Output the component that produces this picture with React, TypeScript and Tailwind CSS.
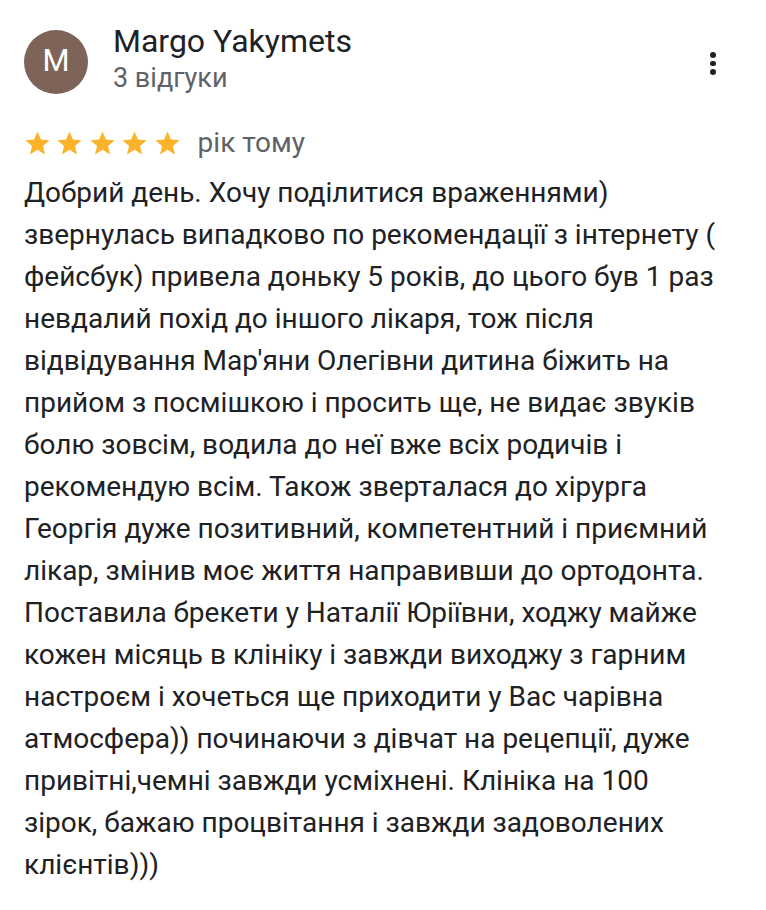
import React from 'react';

const LINES = [
  'Добрий день. Хочу поділитися враженнями)',
  'звернулась випадково по рекомендації з інтернету (',
  'фейсбук) привела доньку 5 років, до цього був 1 раз',
  'невдалий похід до іншого лікаря, тож після',
  "відвідування Мар'яни Олегівни дитина біжить на",
  'прийом з посмішкою і просить ще, не видає звуків',
  'болю зовсім, водила до неї вже всіх родичів і',
  'рекомендую всім. Також зверталася до хірурга',
  'Георгія дуже позитивний, компетентний і приємний',
  'лікар, змінив моє життя направивши до ортодонта.',
  'Поставила брекети у Наталії Юріївни, ходжу майже',
  'кожен місяць в клініку і завжди виходжу з гарним',
  'настроєм і хочеться ще приходити у Вас чарівна',
  'атмосфера)) починаючи з дівчат на рецепції, дуже',
  'привітні,чемні завжди усміхнені. Клініка на 100',
  'зірок, бажаю процвітання і завжди задоволених',
  'клієнтів)))',
];

const Star: React.FC = () => (
  <svg width="29" height="29" viewBox="0 0 24 24" className="shrink-0">
    <path
      fill="#fbb32c"
      d="M12 17.27 18.18 21l-1.64-7.03L22 9.24l-7.19-.61L12 2 9.19 8.63 2 9.24l5.46 4.73L5.82 21z"
    />
  </svg>
);

export default function App() {
  return (
    <div className="w-[766px] h-[910px] bg-white font-['Roboto',sans-serif] text-[#202124]">
      {/* header */}
      <div className="flex items-start pl-[24px] pr-[43px] pt-[23px]">
        <div className="mt-[7px] w-[64px] h-[64px] rounded-full bg-[#7e6458] flex items-center justify-center pb-[4px] text-white text-[31px] leading-none shrink-0">
          M
        </div>
        <div className="ml-[25px] flex-1">
          <p className="text-[32px] leading-[36px] text-[#202124]">Margo Yakymets</p>
          <p className="text-[27px] leading-[38px] text-[#5f6368]">3 відгуки</p>
        </div>
        <button className="mt-[29px] w-[20px] flex flex-col items-center gap-[3px]">
          <span className="w-[5.5px] h-[5.5px] rounded-full bg-[#202124]" />
          <span className="w-[5.5px] h-[5.5px] rounded-full bg-[#202124]" />
          <span className="w-[5.5px] h-[5.5px] rounded-full bg-[#202124]" />
        </button>
      </div>

      {/* rating */}
      <div className="flex items-center h-[34px] pl-[22.6px] mt-[29px]">
        <div className="flex gap-[3.5px]">
          <Star />
          <Star />
          <Star />
          <Star />
          <Star />
        </div>
        <span className="ml-[16px] text-[28px] leading-[34px] text-[#5f6368]">рік тому</span>
      </div>

      {/* body */}
      <div className="pl-[24px] mt-[12px] text-[28px] leading-[42px] text-[#202124]">
        {LINES.map((line, i) => (
          <p key={i} className="whitespace-nowrap">{line}</p>
        ))}
      </div>
    </div>
  );
}
